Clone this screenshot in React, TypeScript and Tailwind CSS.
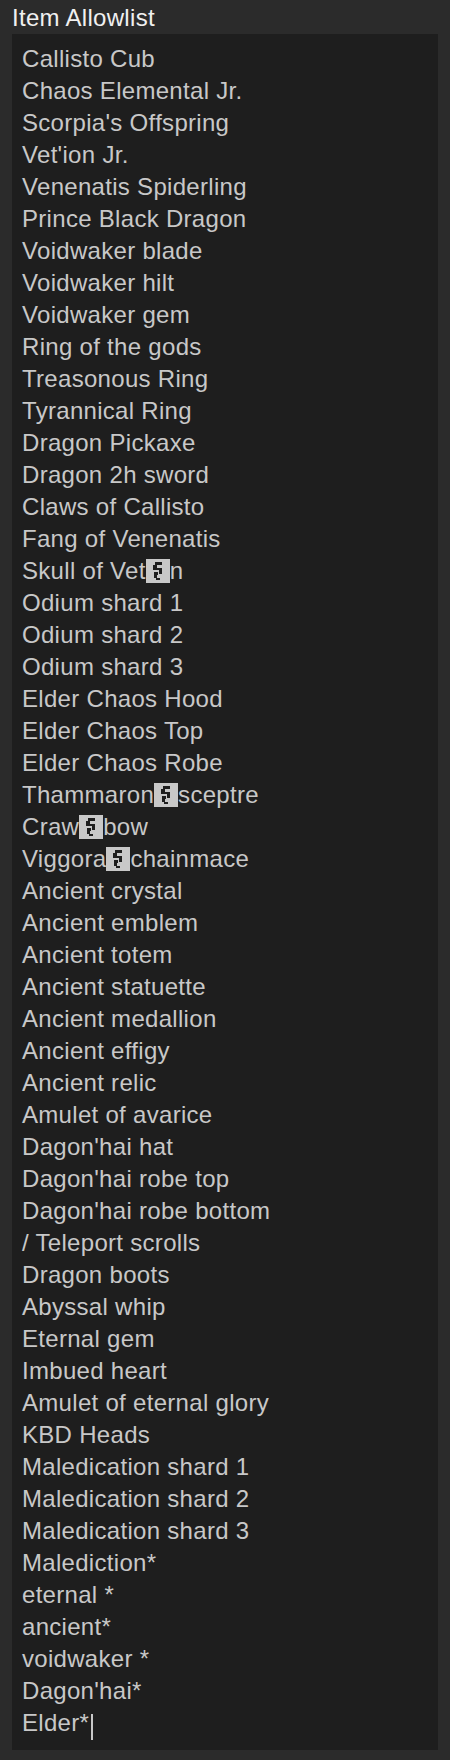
import React from 'react';

// placeholder for glyphs the font cannot draw
const MissingGlyph = () => (
  <span className="inline-block w-[24px] h-[24px] bg-[#c8c8c8] align-[-4px] relative">
    <svg viewBox="0 0 24 24" className="w-full h-full">
      <rect x="9" y="3" width="7" height="3" fill="#1e1e1e" />
      <rect x="7" y="6" width="4" height="3" fill="#1e1e1e" />
      <rect x="7" y="9" width="9" height="2" fill="#1e1e1e" />
      <rect x="13" y="11" width="3" height="4" fill="#1e1e1e" />
      <rect x="8" y="13" width="4" height="3" fill="#1e1e1e" />
      <rect x="8" y="16" width="3" height="3" fill="#1e1e1e" />
      <rect x="10" y="19" width="4" height="2" fill="#1e1e1e" />
    </svg>
  </span>
);

type Line = string | [string, string];

const lines: Line[] = [
  'Callisto Cub',
  'Chaos Elemental Jr.',
  "Scorpia's Offspring",
  "Vet'ion Jr.",
  'Venenatis Spiderling',
  'Prince Black Dragon',
  'Voidwaker blade',
  'Voidwaker hilt',
  'Voidwaker gem',
  'Ring of the gods',
  'Treasonous Ring',
  'Tyrannical Ring',
  'Dragon Pickaxe',
  'Dragon 2h sword',
  'Claws of Callisto',
  'Fang of Venenatis',
  ['Skull of Vet', 'n'],
  'Odium shard 1',
  'Odium shard 2',
  'Odium shard 3',
  'Elder Chaos Hood',
  'Elder Chaos Top',
  'Elder Chaos Robe',
  ['Thammaron', 'sceptre'],
  ['Craw', 'bow'],
  ['Viggora', 'chainmace'],
  'Ancient crystal',
  'Ancient emblem',
  'Ancient totem',
  'Ancient statuette',
  'Ancient medallion',
  'Ancient effigy',
  'Ancient relic',
  'Amulet of avarice',
  "Dagon'hai hat",
  "Dagon'hai robe top",
  "Dagon'hai robe bottom",
  '/ Teleport scrolls',
  'Dragon boots',
  'Abyssal whip',
  'Eternal gem',
  'Imbued heart',
  'Amulet of eternal glory',
  'KBD Heads',
  'Maledication shard 1',
  'Maledication shard 2',
  'Maledication shard 3',
  'Malediction*',
  'eternal *',
  'ancient*',
  'voidwaker *',
  "Dagon'hai*",
];

export default function App() {
  return (
    <div className="w-[450px] h-[1760px] bg-[#2b2b2b] px-3 font-['Liberation_Sans',Arial,sans-serif] text-[24px] leading-[32px] tracking-[0.3px]">
      <div className="h-[34px] pt-[2px] text-[#f0f0f0] whitespace-pre">Item Allowlist</div>

      {/* Text area */}
      <div className="h-[1716px] bg-[#1e1e1e] pl-[10px] pt-[9px] text-[#c8c8c8]">
        {lines.map((line, i) => (
          <div key={i} className="h-[32px] whitespace-pre">
            {typeof line === 'string' ? (
              line
            ) : (
              <>
                {line[0]}
                <MissingGlyph />
                {line[1]}
              </>
            )}
          </div>
        ))}
        <div className="h-[32px] whitespace-pre flex items-center">
          <span>Elder*</span>
          <span className="inline-block w-[2px] h-[26px] bg-[#c8c8c8] ml-[2px] mt-[8px]" />
        </div>
      </div>
    </div>
  );
}
